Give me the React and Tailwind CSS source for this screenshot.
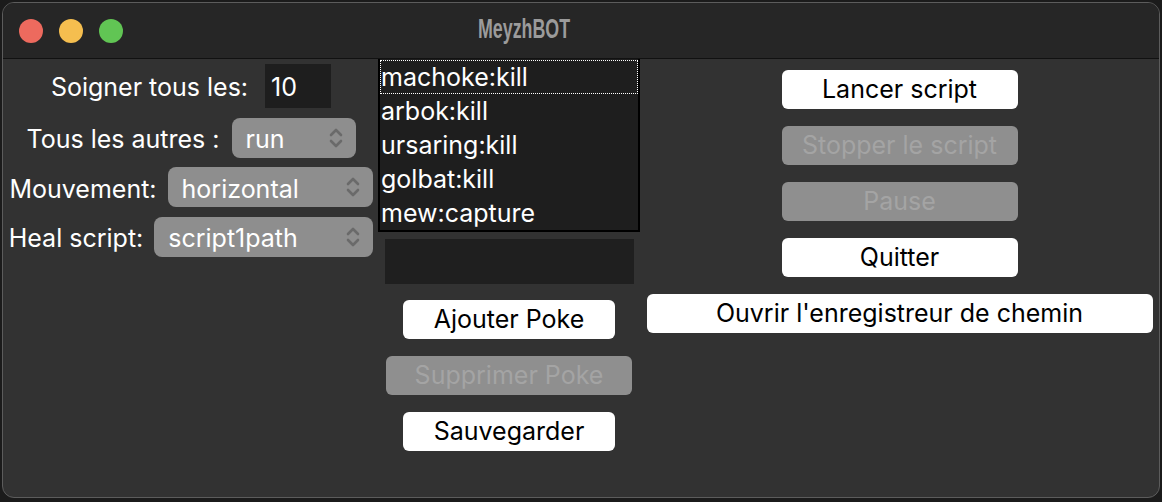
import React from 'react';

const font = { fontFamily: 'Inter, "Noto Sans", sans-serif' };

const Chevrons = () => (
    <svg width="14" height="22" viewBox="0 0 14 22" fill="none" stroke="#6a6a6a" strokeWidth="2.6" strokeLinecap="round" strokeLinejoin="round">
        <path d="M2 8 L7 3 L12 8" />
        <path d="M2 14 L7 19 L12 14" />
    </svg>
);

const Select = ({ value, width }) => (
    <div className={`h-[40px] ${width} bg-[#8e8e8e] rounded-[8px] flex items-center justify-between pl-[14px] pr-[13px]`}>
        <span className="text-white text-[25px] pt-[4px]">{value}</span>
        <Chevrons />
    </div>
);

const Button = ({ label, width, disabled }) => (
    <div
        className={`h-[39px] ${width} rounded-[6px] flex items-center justify-center text-[25px] ${
            disabled ? 'bg-[#8f8f8f] text-[#a4a4a4]' : 'bg-white text-black'
        }`}
    >
        {label}
    </div>
);

const pokes = ['machoke:kill', 'arbok:kill', 'ursaring:kill', 'golbat:kill', 'mew:capture'];

const App = () => {
    return (
        <div className="w-[1162px] h-[502px] bg-[#1b1b1b] pt-[2px] px-[2px] overflow-hidden" style={font}>
            <div className="h-[496px] w-[1158px] rounded-[12px] border border-[#5c5c5c] bg-[#323232] overflow-hidden flex flex-col">
                {/* title bar */}
                <div className="h-[56px] bg-[#262626] border-b border-[#111111] flex items-center relative shrink-0">
                    <div className="flex gap-[16px] pl-[16px]">
                        <span className="w-[24px] h-[24px] rounded-full bg-[#ed6a5e]" />
                        <span className="w-[24px] h-[24px] rounded-full bg-[#f5be4f]" />
                        <span className="w-[24px] h-[24px] rounded-full bg-[#61c554]" />
                    </div>
                    <div
                        className="absolute left-[475px] top-[9px] text-[27px] leading-[34px] font-bold text-[#9b9b9b] origin-left scale-x-[0.66]"
                        style={{ fontFamily: '"Liberation Sans", Arial, sans-serif' }}
                    >
                        MeyzhBOT
                    </div>
                </div>

                {/* content */}
                <div className="flex flex-1 text-white">
                    {/* left column */}
                    <div className="w-[375px] pl-[1px] flex flex-col items-center pt-[5px]">
                        <div className="flex items-center gap-[17px] h-[44px]">
                            <span className="text-[25px] pt-[4px]">Soigner tous les:</span>
                            <div className="w-[66px] h-[44px] bg-[#1e1e1e] flex items-center pl-[6px] pt-[4px] text-[25px]">10</div>
                        </div>
                        <div className="flex items-center gap-[12px] mt-[9px]">
                            <span className="text-[25px] pt-[4px]">Tous les autres :</span>
                            <Select value="run" width="w-[124px]" />
                        </div>
                        <div className="flex items-center gap-[11px] mt-[8px]">
                            <span className="text-[25px] pt-[4px]">Mouvement:</span>
                            <Select value="horizontal" width="w-[205px]" />
                        </div>
                        <div className="flex items-center gap-[11px] mt-[8px]">
                            <span className="text-[25px] pt-[4px]">Heal script:</span>
                            <Select value="script1path" width="w-[219px]" />
                        </div>
                    </div>

                    {/* middle column */}
                    <div className="w-[262px] flex flex-col items-center">
                        <div className="w-[262px] h-[173px] bg-[#1e1e1e] border-2 border-black border-t-0 pt-[1px]">
                            {pokes.map((p, i) => (
                                <div
                                    key={p}
                                    className={`h-[34px] flex items-center text-[25px] leading-none ${
                                        i === 0 ? 'border border-dotted border-white' : 'border border-transparent'
                                    }`}
                                >
                                    {p}
                                </div>
                            ))}
                        </div>
                        <div className="w-[249px] h-[45px] bg-[#1f1f1f] mt-[7px]" />
                        <div className="mt-[16px]">
                            <Button label="Ajouter Poke" width="w-[212px]" />
                        </div>
                        <div className="mt-[17px]">
                            <Button label="Supprimer Poke" width="w-[246px]" disabled />
                        </div>
                        <div className="mt-[17px]">
                            <Button label="Sauvegarder" width="w-[212px]" />
                        </div>
                    </div>

                    {/* right column */}
                    <div className="flex-1 flex flex-col items-center pt-[11px] gap-[17px] pr-[5px] pl-[5px]">
                        <Button label="Lancer script" width="w-[236px]" />
                        <Button label="Stopper le script" width="w-[236px]" disabled />
                        <Button label="Pause" width="w-[236px]" disabled />
                        <Button label="Quitter" width="w-[236px]" />
                        <Button label="Ouvrir l'enregistreur de chemin" width="w-[506px]" />
                    </div>
                </div>
            </div>
        </div>
    );
};

export default App;
